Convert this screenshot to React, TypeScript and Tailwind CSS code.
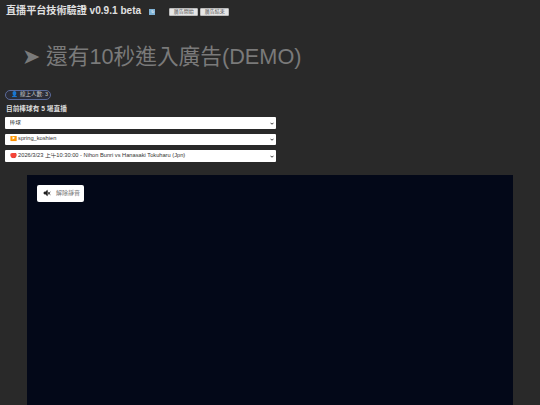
const font = { fontFamily: '"Liberation Sans", "Noto Sans CJK TC", sans-serif' };

const options = ["棒球", "▶️ spring_koshien", "🔴 2026/3/23 上午10:30:00 - Nihon Bunri vs Hanasaki Tokuharu (Jpn)"];

function Select({ label }: { label: string }) {
  return (
    <div className="relative h-[11.5px] w-full">
      <select className="block h-full w-full appearance-none rounded-[1px] bg-white pl-[4.5px] text-[5.7px] leading-none text-[#333]">
        <option>{label}</option>
      </select>
      {/* small native-like arrow */}
      <svg viewBox="0 0 8 5" className="pointer-events-none absolute top-[4.5px] right-[2px] h-[3px] w-[4px]" fill="none" stroke="#222" strokeWidth="1.8">
        <path d="M1 1l3 3 3-3" />
      </svg>
    </div>
  );
}

export default function App() {
  return (
    <div style={font} className="h-[405px] w-[540px] overflow-hidden bg-[#292929]">
      {/* header */}
      <div className="flex h-[23px] items-center pl-[6px]">
        <h1 className="text-[10.1px] leading-none font-bold whitespace-nowrap text-[#e0e0e0]">直播平台技術驗證 v0.9.1 beta</h1>
        <span className="ml-[8px] flex h-[6px] w-[6px] items-center justify-center bg-[#7fb2d6] text-[4px] text-white">↻</span>
        <div className="ml-[14px] flex gap-[2px]">
          <button className="h-[8px] w-[29px] rounded-[1px] border border-[#bbb] bg-[#e6e6e6] text-[5px] leading-none text-[#555]">廣告開始</button>
          <button className="h-[8px] w-[29px] rounded-[1px] border border-[#bbb] bg-[#e6e6e6] text-[5px] leading-none text-[#555]">廣告結束</button>
        </div>
      </div>

      {/* ad countdown */}
      <div className="mt-[20px] pl-[22px] text-[21.7px] leading-[28px] whitespace-nowrap text-[#7a7a7a]">➤ 還有10秒進入廣告(DEMO)</div>

      {/* viewers */}
      <div className="mt-[19px] ml-[5px] flex h-[10px] w-[46px] items-center rounded-full border border-[#5a6a9a] bg-[#2b2d38] pl-[5px] text-[5.5px] leading-none whitespace-nowrap text-[#c4c4c4]">
        <span className="mr-[2px] text-[#4a8fd0]">👤</span>線上人數: 3
      </div>
      <div className="mt-[5px] pl-[6px] text-[6.7px] leading-[8px] font-bold text-[#dcdcdc]">目前棒球有 5 場直播</div>

      {/* selects */}
      <div className="mt-[4px] ml-[5px] flex w-[270.5px] flex-col gap-[5px]">
        {options.map((o) => (
          <Select key={o} label={o} />
        ))}
      </div>

      {/* player */}
      <div className="mt-[13px] ml-[27px] h-[230px] w-[486px] bg-[#030818] pt-[10px] pl-[10px]">
        <button className="flex h-[17.5px] w-[47px] items-center rounded-[2px] bg-white pl-[6px] text-[6px] text-[#777]">
          <svg viewBox="0 0 24 24" className="mr-[5px] h-[8px] w-[8px]" fill="#222" stroke="#222" strokeWidth="2">
            <path d="M3 9v6h4l6 5V4L7 9z" />
            <path d="M14 9l8 8M22 9l-8 8" fill="none" strokeWidth="3" />
          </svg>
          解除靜音
        </button>
      </div>
    </div>
  );
}
